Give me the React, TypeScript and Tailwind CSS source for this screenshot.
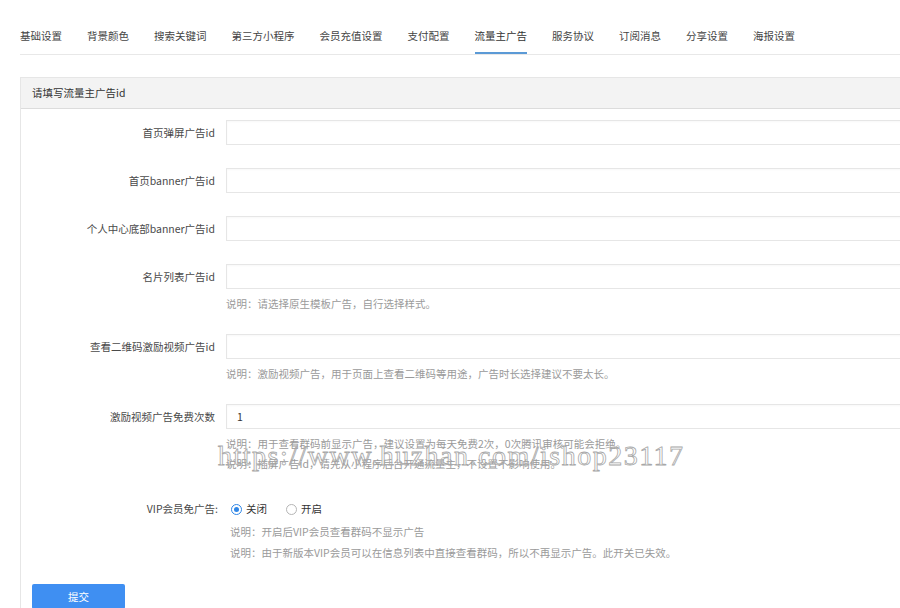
const tabs = [
  "基础设置",
  "背景颜色",
  "搜索关键词",
  "第三方小程序",
  "会员充值设置",
  "支付配置",
  "流量主广告",
  "服务协议",
  "订阅消息",
  "分享设置",
  "海报设置",
];

interface Field {
  label: string;
  value?: string;
  notes?: string[];
}

const fields: Field[] = [
  { label: "首页弹屏广告id" },
  { label: "首页banner广告id" },
  { label: "个人中心底部banner广告id" },
  { label: "名片列表广告id", notes: ["说明：请选择原生模板广告，自行选择样式。"] },
  {
    label: "查看二维码激励视频广告id",
    notes: ["说明：激励视频广告，用于页面上查看二维码等用途，广告时长选择建议不要太长。"],
  },
  {
    label: "激励视频广告免费次数",
    value: "1",
    notes: [
      "说明：用于查看群码前显示广告，建议设置为每天免费2次，0次腾讯审核可能会拒绝。",
      "说明：插屏广告id，请先从小程序后台开通流量主，不设置不影响使用。",
    ],
  },
];

function Radio({ checked, label }: { checked: boolean; label: string }) {
  return (
    <label className="flex items-center gap-[4px]">
      <span
        className={`flex h-[11px] w-[11px] items-center justify-center rounded-full border ${
          checked ? "border-[#2f86e6]" : "border-[#b5b5b5]"
        }`}
      >
        {checked && <span className="h-[5px] w-[5px] rounded-full bg-[#2f86e6]" />}
      </span>
      <span>{label}</span>
    </label>
  );
}

export default function App() {
  const active = "流量主广告";

  return (
    <div className="relative h-[608px] w-[900px] overflow-hidden bg-white font-['Noto_Sans_CJK_SC',sans-serif] text-[10.5px] text-[#333]">
      <div className="w-[1000px]">
        <div className="ml-[20px] flex gap-[25px] border-b border-[#e8e8e8] pt-[29px]">
          {tabs.map((t) => (
            <div
              key={t}
              className={`border-b-2 pb-[9px] leading-[14px] ${
                t === active ? "border-[#5b9ad6] text-[#333]" : "border-transparent text-[#444]"
              }`}
            >
              {t}
            </div>
          ))}
        </div>

        <div className="ml-[20px] mt-[22px] border border-[#e6e6e6]">
          <div className="border-b border-[#dcdcdc] bg-[#f3f3f3] px-[11px] py-[8px] leading-[14px]">
            请填写流量主广告id
          </div>

          <div className="pt-[11px] pb-[20px]">
            {fields.map((f) => (
              <div key={f.label} className={f.notes ? "mb-[20px]" : "mb-[23px]"}>
                <div className="flex items-center">
                  <div className="w-[194px] text-right text-[#4a4a4a]">{f.label}</div>
                  <input
                    readOnly
                    value={f.value ?? ""}
                    className="ml-[11px] h-[25px] flex-1 border border-[#e6e6e6] px-[10px] text-[10.5px] text-[#333] shadow-[inset_0_1px_2px_rgba(0,0,0,0.03)] outline-none"
                  />
                </div>
                {f.notes && (
                  <div className="ml-[205px] mt-[5px] text-[#9a9a9a]">
                    {f.notes.map((n) => (
                      <div key={n} className="leading-[20px]">
                        {n}
                      </div>
                    ))}
                  </div>
                )}
              </div>
            ))}

            <div className="-mt-[20px] pt-[25px]">
              <div className="flex items-center leading-[20px]">
                <div className="w-[197px] text-right text-[#4a4a4a]">VIP会员免广告:</div>
                <div className="ml-[13px] flex items-center gap-[19px]">
                  <Radio checked label="关闭" />
                  <Radio checked={false} label="开启" />
                </div>
              </div>
              <div className="ml-[209px] mt-[2px] text-[#9a9a9a]">
                <div className="leading-[21px]">说明：开启后VIP会员查看群码不显示广告</div>
                <div className="leading-[21px]">
                  说明：由于新版本VIP会员可以在信息列表中直接查看群码，所以不再显示广告。此开关已失效。
                </div>
              </div>
            </div>

            <div className="ml-[11px] mt-[21px]">
              <button className="h-[25px] w-[93px] rounded-[2px] bg-[#3f8ff2] text-[10.5px] leading-[25px] text-white">
                提交
              </button>
            </div>
          </div>
        </div>
      </div>

      <div className="pointer-events-none absolute left-[218px] top-[440px] font-['Liberation_Serif',serif] text-[28px] leading-[32px] tracking-[1.5px] text-transparent [-webkit-text-stroke:0.8px_#a8a8a8]">
        https://www.huzhan.com/ishop23117
      </div>
    </div>
  );
}
